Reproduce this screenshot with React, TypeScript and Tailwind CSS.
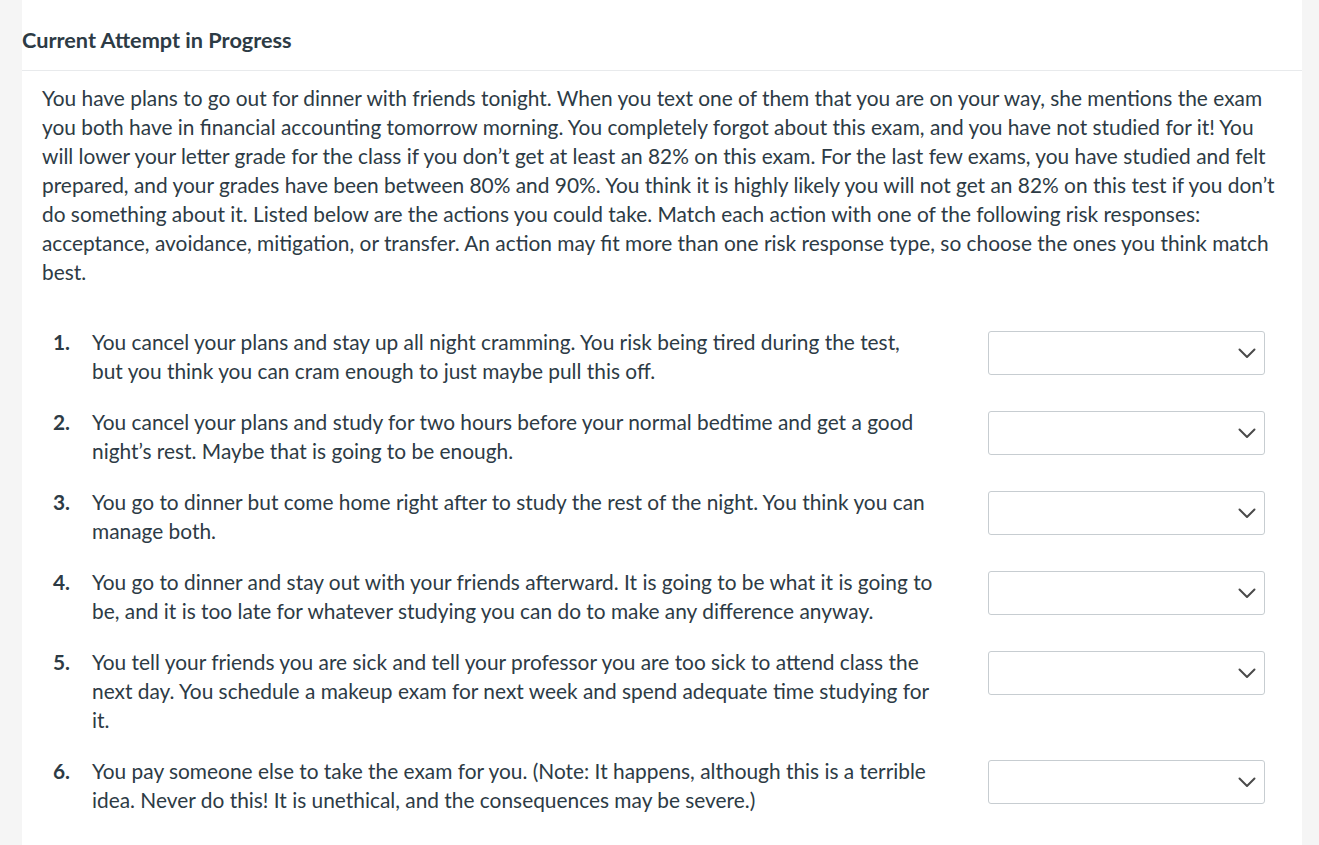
import React from 'react';

const ITEMS = [
  'You cancel your plans and stay up all night cramming. You risk being tired during the test, but you think you can cram enough to just maybe pull this off.',
  'You cancel your plans and study for two hours before your normal bedtime and get a good night\u2019s rest. Maybe that is going to be enough.',
  'You go to dinner but come home right after to study the rest of the night. You think you can manage both.',
  'You go to dinner and stay out with your friends afterward. It is going to be what it is going to be, and it is too late for whatever studying you can do to make any difference anyway.',
  'You tell your friends you are sick and tell your professor you are too sick to attend class the next day. You schedule a makeup exam for next week and spend adequate time studying for it.',
  'You pay someone else to take the exam for you. (Note: It happens, although this is a terrible idea. Never do this! It is unethical, and the consequences may be severe.)',
];

const Chevron = () => (
  <svg width="18" height="11" viewBox="0 0 18 11" fill="none" stroke="#4a4a4a" strokeWidth="2" strokeLinecap="round" strokeLinejoin="round">
    <path d="M1.5 1.5l7.5 7.5 7.5-7.5" />
  </svg>
);

const Dropdown = () => (
  <div className="mt-[4px] w-[277px] h-[44px] shrink-0 flex items-center justify-end pr-[8px] bg-white border border-[#c7cdd1] rounded-[3px]">
    <Chevron />
  </div>
);

export default function App() {
  return (
    <div className="flex w-[1319px] h-[845px] overflow-hidden bg-[#f5f5f5] text-[#2d3b45]" style={{ fontFamily: 'Lato, "Open Sans", sans-serif' }}>
      <div className="ml-[22px] w-[1280px] bg-white">
        <div className="pt-[28px] pb-[18px] border-b border-[#e8eaec]">
          <h2 className="text-[21.7px] leading-[24px] font-bold">Current Attempt in Progress</h2>
        </div>
        <div className="pl-[20px] pr-[22px] pt-[12px] text-[20.88px] leading-[29px]">
          <p>
            You have plans to go out for dinner with friends tonight. When you text one of them that you are on your way, she mentions the exam you both have in financial accounting tomorrow morning. You completely forgot about this exam, and you have not studied for it! You will lower your letter grade for the class if you don&rsquo;t get at least an 82% on this exam. For the last few exams, you have studied and felt prepared, and your grades have been between 80% and 90%. You think it is highly likely you will not get an 82% on this test if you don&rsquo;t do something about it. Listed below are the actions you could take. Match each action with one of the following risk responses: acceptance, avoidance, mitigation, or transfer. An action may fit more than one risk response type, so choose the ones you think match best.
          </p>
          <ol className="mt-[41px] flex flex-col gap-[22px]">
            {ITEMS.map((text, i) => (
              <li key={i} className="flex pl-[11px]">
                <span className="w-[39px] shrink-0 font-bold">{i + 1}.</span>
                <span className="w-[843px] shrink-0">{text}</span>
                <div className="ml-[53px]">
                  <Dropdown />
                </div>
              </li>
            ))}
          </ol>
        </div>
      </div>
    </div>
  );
}
